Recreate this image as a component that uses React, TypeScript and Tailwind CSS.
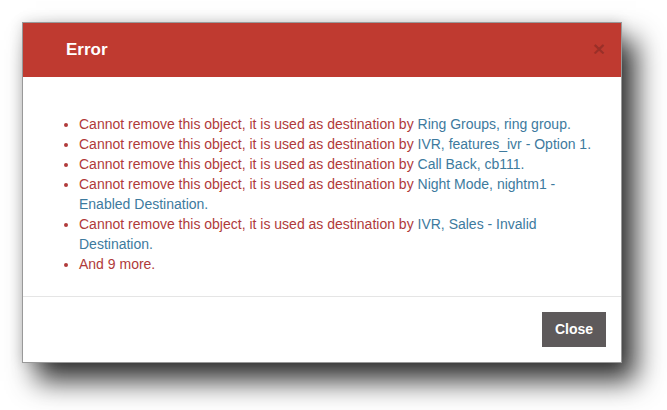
import React from 'react';

type Item = { text: string; link?: string };

const items: Item[] = [
  { text: 'Cannot remove this object, it is used as destination by ', link: 'Ring Groups, ring group.' },
  { text: 'Cannot remove this object, it is used as destination by ', link: 'IVR, features_ivr - Option 1.' },
  { text: 'Cannot remove this object, it is used as destination by ', link: 'Call Back, cb111.' },
  { text: 'Cannot remove this object, it is used as destination by ', link: 'Night Mode, nightm1 - Enabled Destination.' },
  { text: 'Cannot remove this object, it is used as destination by ', link: 'IVR, Sales - Invalid Destination.' },
  { text: 'And 9 more.' },
];

const App = () => {
  return (
    <div
      className="w-[667px] h-[410px] bg-white pt-[22px] pl-[22px] overflow-hidden"
      style={{ fontFamily: '"Liberation Sans", Arial, sans-serif' }}
    >
      <div className="w-[600px] h-[341px] bg-white flex flex-col border border-black/40 shadow-[14px_18px_26px_rgba(0,0,0,0.8),0_0_12px_rgba(0,0,0,0.14)]">
        {/* header */}
        <div className="h-[54px] shrink-0 bg-[#bf3a30] flex items-center justify-between pl-[43px] pr-[16px]">
          <h4 className="text-white font-bold text-[17px]">Error</h4>
          <span className="text-[21px] font-bold leading-none text-black/20 pb-[4px]">×</span>
        </div>

        {/* body */}
        <div className="flex-1 pt-[37px] pl-[15px] pr-[15px]">
          <ul className="list-disc pl-[41px] text-[14px] leading-[20px] text-[#b03a3a] marker:text-[#b03a3a]">
            {items.map((item, idx) => (
              <li key={idx}>
                {item.text}
                {item.link && <a className="text-[#3d7a9e]">{item.link}</a>}
              </li>
            ))}
          </ul>
        </div>

        {/* footer */}
        <div className="h-[66px] shrink-0 border-t border-[#e5e5e5] flex items-center justify-end pr-[15px]">
          <button className="w-[64px] h-[35px] bg-[#5e5a5b] text-white font-bold text-[14px]">Close</button>
        </div>
      </div>
    </div>
  );
};

export default App;
